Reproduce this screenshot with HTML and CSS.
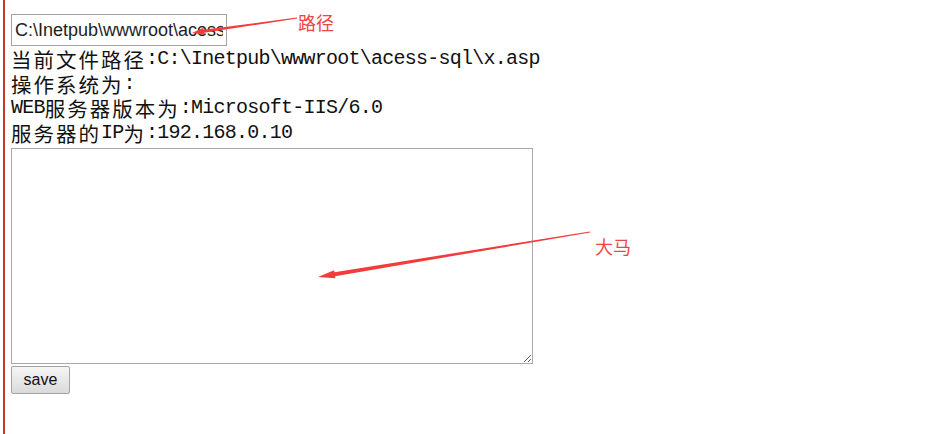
FILE: index.html
```html
<!DOCTYPE html>
<html lang="zh">
<head>
<meta charset="utf-8">
<title>x.asp</title>
<link rel="stylesheet" href="styles.css">
</head>
<body>
<div class="page">
  <input class="path" type="text" value="C:\Inetpub\wwwroot\acess-sql\x.asp">
  <div class="info">
    <div class="line"><span class="cj">当前文件路径</span>:C:\Inetpub\wwwroot\acess-sql\x.asp</div>
    <div class="line"><span class="cj">操作系统为</span>:</div>
    <div class="line">WEB<span class="cj">服务器版本为</span>:Microsoft-IIS/6.0</div>
    <div class="line"><span class="cj">服务器的</span>IP<span class="cj">为</span>:192.168.0.10</div>
  </div>
  <textarea class="code"></textarea>
  <button class="save" type="button">save</button>
</div>
<svg class="marks" width="936" height="434" viewBox="0 0 936 434">
  <polygon fill="#f23b3b" points="296.9,17.5 297.1,18.5 204.1,32.8 204.4,34.8 192,33 203.4,27.8 203.7,29.8"/>
  <polygon fill="#f23b3b" points="589.9,231.6 590.1,232.4 335.1,276.2 335.4,278.2 318,277 334.1,270.3 334.5,272.2"/>
</svg>
<span class="note note-path">路径</span>
<span class="note note-big">大马</span>
</body>
</html>
```

FILE: styles.css
```css
html, body {
  margin: 0;
  padding: 0;
  background: #fff;
}
body {
  position: relative;
  width: 936px;
  height: 434px;
  overflow: hidden;
}
.page {
  margin-left: 3px;
  border-left: 2px solid #c4372b;
  padding-left: 6px;
  height: 434px;
  box-sizing: border-box;
  padding-top: 14px;
}
.path {
  display: block;
  box-sizing: border-box;
  width: 216px;
  height: 32px;
  margin: 0;
  padding: 0 3px;
  border: 1px solid #a4a4a4;
  font-family: "Liberation Sans", Arial, sans-serif;
  font-size: 18px;
  color: #1e1e1e;
  outline: none;
}
.info {
  margin-top: 1px;
  font-family: "Liberation Mono", "Noto Sans CJK SC", monospace;
  font-size: 20px;
  letter-spacing: -0.75px;
  line-height: 24.5px;
  color: #111;
  white-space: nowrap;
}
.line {
  height: 24.5px;
}
.cj {
  font-family: "Noto Sans CJK SC", sans-serif;
  font-size: 20.5px;
  letter-spacing: 2px;
  line-height: 24.5px;
  vertical-align: top;
}
.code {
  display: block;
  box-sizing: border-box;
  width: 522px;
  height: 216px;
  margin: 3px 0 0 0;
  border: 1px solid #a9a9a9;
  padding: 2px;
  resize: both;
  background: #fff;
}
.save {
  display: block;
  box-sizing: border-box;
  width: 59px;
  height: 28px;
  margin-top: 2px;
  padding: 0;
  border: 1px solid #a3a3a3;
  border-radius: 2px;
  background: linear-gradient(#f6f6f6, #dadada);
  font-family: "Liberation Sans", Arial, sans-serif;
  font-size: 16px;
  color: #111;
}
.marks {
  position: absolute;
  left: 0;
  top: 0;
  pointer-events: none;
}
.note {
  position: absolute;
  font-family: "Noto Sans CJK SC", sans-serif;
  font-size: 18px;
  line-height: 20px;
  color: #f04444;
}
.note-path {
  left: 298px;
  top: 12px;
}
.note-big {
  left: 595px;
  top: 236px;
}
```
